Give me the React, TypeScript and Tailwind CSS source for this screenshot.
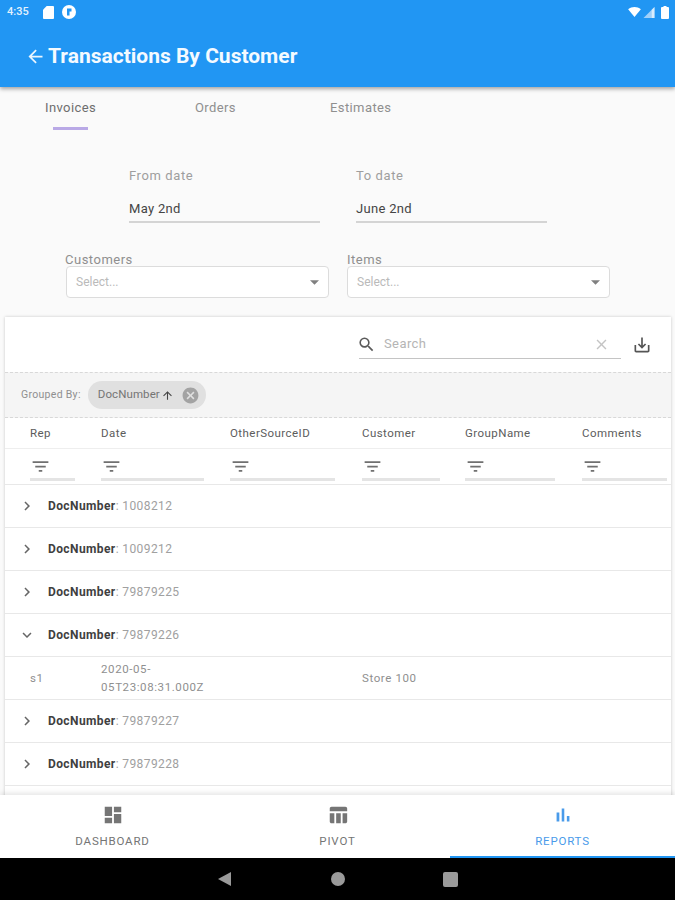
const font = { fontFamily: 'Roboto, "Noto Sans", sans-serif' }

function Icon({ d, className }: { d: string; className?: string }) {
  return (
    <svg viewBox="0 0 24 24" fill="currentColor" className={className}>
      <path d={d} />
    </svg>
  )
}

const FILTER = 'M10 18h4v-2h-4v2zM3 6v2h18V6H3zm3 7h12v-2H6v2z'
const CHEVRON_RIGHT = 'M8.59 16.59 13.17 12 8.59 7.41 10 6l6 6-6 6z'
const CHEVRON_DOWN = 'M7.41 8.59 12 13.17l4.59-4.58L18 10l-6 6-6-6z'

const columns = [
  { name: 'Rep', line: 'w-[45px]' },
  { name: 'Date', line: 'w-[103px]' },
  { name: 'OtherSourceID', line: 'w-[105px]' },
  { name: 'Customer', line: 'w-[78px]' },
  { name: 'GroupName', line: 'w-[90px]' },
  { name: 'Comments', line: 'w-[85px]' },
]

const gridCols = 'grid grid-cols-[71px_129px_132px_103px_117px_89px] pl-[25px]'

function GroupRow({ doc, open }: { doc: string; open?: boolean }) {
  return (
    <div className="flex h-[43px] items-center border-b border-[#e8e8e8] pl-[13px]">
      <Icon d={open ? CHEVRON_DOWN : CHEVRON_RIGHT} className="h-[18px] w-[18px] text-[#666]" />
      <span className="ml-[12px] pb-[1px] text-[12px] tracking-[0.4px] text-[#a0a0a0]">
        <b className="font-bold text-[#3f3f3f]">DocNumber</b>: {doc}
      </span>
    </div>
  )
}

function SelectBox({ label, width, labelClass }: { label: string; width: string; labelClass?: string }) {
  return (
    <div className={width}>
      <div className={'h-[13px] text-[13px] leading-[14px] tracking-[0.5px] text-[#8f8f8f] ' + (labelClass ?? '')}>{label}</div>
      <div className="flex h-[32px] items-center justify-between rounded border border-[#dcdcdc] bg-white pl-[9px] pr-[9px]">
        <span className="text-[12px] text-[#bababa]">Select...</span>
        <svg viewBox="0 0 10 5" className="h-[5px] w-[9px] text-[#808080]" fill="currentColor">
          <path d="M0 0h10L5 5z" />
        </svg>
      </div>
    </div>
  )
}

function DateField({ label, value }: { label: string; value: string }) {
  return (
    <div className="w-[191px]">
      <div className="text-[13px] leading-[16px] tracking-[0.6px] text-[#9e9e9e]">{label}</div>
      <div className="mt-[16px] border-b-2 border-[#d4d4d4] pb-[4px] text-[13px] leading-[17px] tracking-[0.3px] text-[#454545]">{value}</div>
    </div>
  )
}

function NavItem({ label, d, active }: { label: string; d: string; active?: boolean }) {
  return (
    <div
      className={
        active
          ? 'flex flex-1 flex-col items-center border-b-2 border-[#2196f3] text-[#4a9bea]'
          : 'flex flex-1 flex-col items-center border-b-2 border-transparent text-[#757575]'
      }
    >
      <Icon d={d} className="mt-[9px] h-[22px] w-[22px]" />
      <span className="mt-[8px] text-[11.5px] leading-[14px] tracking-[0.8px]">{label}</span>
    </div>
  )
}

export default function App() {
  return (
    <div style={font} className="flex h-[900px] w-[675px] flex-col overflow-hidden bg-[#fafafa]">
      {/* app bar */}
      <div className="relative z-10 h-[87px] shrink-0 bg-[#2196f3] text-white shadow-[0_2px_4px_rgba(0,0,0,0.35)]">
        <div className="flex h-[24px] items-center pl-[7px] pr-[6px]">
          <span className="text-[11px] font-medium text-[#e3f1fd]">4:35</span>
          <svg viewBox="0 0 12 14" className="ml-[14px] h-[13px] w-[11px]" fill="currentColor">
            <path d="M4 0h7a1 1 0 0 1 1 1v12a1 1 0 0 1-1 1H1a1 1 0 0 1-1-1V4z" />
          </svg>
          <svg viewBox="0 0 14 14" className="ml-[8px] h-[14px] w-[14px]">
            <circle cx="7" cy="7" r="7" fill="#fff" />
            <path d="M5 3.5h4.5v3H7.5V10.5H5z" fill="#2196f3" />
          </svg>
          <div className="ml-auto flex items-center gap-[2px]">
            <svg viewBox="0 0 14 11" className="h-[10px] w-[13px]" fill="currentColor">
              <path d="M0 2.5C4-.8 10-.8 14 2.5L7 11z" />
            </svg>
            <svg viewBox="0 0 12 12" className="h-[11px] w-[12px]">
              <path d="M12 0v12H0z" fill="#9fd0fa" />
              <path d="M12 0v12H9V3z" fill="#fff" opacity="0.6" />
            </svg>
            <svg viewBox="0 0 8 13" className="ml-[4px] h-[13px] w-[8px]" fill="currentColor">
              <path d="M2.5 0h3v1H7a1 1 0 0 1 1 1v10a1 1 0 0 1-1 1H1a1 1 0 0 1-1-1V2a1 1 0 0 1 1-1h1.5z" />
            </svg>
          </div>
        </div>
        <div className="mt-[19px] flex items-center pl-[25px]">
          <Icon d="M20 11H7.83l5.59-5.59L12 4l-8 8 8 8 1.41-1.41L7.83 13H20v-2z" className="h-[21px] w-[21px] text-[#eaf5fe]" />
          <span className="ml-[2px] text-[21px] font-bold leading-[26px] text-[#f4faff]">Transactions By Customer</span>
        </div>
      </div>

      {/* content, cut off by the bottom nav */}
      <div className="min-h-0 flex-1 overflow-hidden">
        <div className="flex h-[44px] pl-[45px] text-[13px] tracking-[0.4px] text-[#8f8f8f]">
          <div className="relative w-[150px] pt-[11px] text-[#6e6e6e]">
            Invoices
            <div className="absolute left-[8px] top-[40px] h-[3px] w-[35px] bg-[#b9a9e6]" />
          </div>
          <div className="w-[135px] pt-[11px]">Orders</div>
          <div className="pt-[11px]">Estimates</div>
        </div>

        <div className="mt-[37px] flex gap-[36px] pl-[129px]">
          <DateField label="From date" value="May 2nd" />
          <DateField label="To date" value="June 2nd" />
        </div>

        <div className="mt-[30px] flex gap-[18px] pl-[66px]">
          <SelectBox label="Customers" width="w-[263px]" labelClass="-ml-[1px]" />
          <SelectBox label="Items" width="w-[263px]" />
        </div>

        {/* table card */}
        <div className="ml-[5px] mt-[19px] w-[666px] bg-white shadow-[0_0_3px_rgba(0,0,0,0.2)]">
          <div className="flex h-[55px] items-center justify-end pr-[19px]">
            <div className="flex h-[28px] w-[262px] items-center border-b border-[#c4c4c4] pr-[11px]">
              <Icon
                d="M15.5 14h-.79l-.28-.27A6.47 6.47 0 0 0 16 9.5 6.5 6.5 0 1 0 9.5 16c1.61 0 3.09-.59 4.23-1.57l.27.28v.79l5 4.99L20.49 19l-4.99-5zm-6 0C7.01 14 5 11.99 5 9.5S7.01 5 9.5 5 14 7.01 14 9.5 11.99 14 9.5 14z"
                className="-ml-[2px] h-[19px] w-[19px] text-[#5a5a5a]"
              />
              <span className="ml-[8px] text-[13px] tracking-[0.4px] text-[#b5b5b5]">Search</span>
              <Icon
                d="M19 6.41 17.59 5 12 10.59 6.41 5 5 6.41 10.59 12 5 17.59 6.41 19 12 13.41 17.59 19 19 17.59 13.41 12 19 6.41z"
                className="ml-auto h-[17px] w-[17px] text-[#c4c4c4]"
              />
            </div>
            <Icon
              d="M19 12v7H5v-7H3v7c0 1.1.9 2 2 2h14c1.1 0 2-.9 2-2v-7h-2zm-6 .67 2.59-2.58L17 11.5l-5 5-5-5 1.41-1.41L11 12.67V3h2z"
              className="ml-[11px] h-[20px] w-[20px] text-[#555]"
            />
          </div>

          <div className="flex h-[46px] items-center border-y border-dashed border-[#d8d8d8] bg-[#f5f5f5] pl-[16px]">
            <span className="text-[10.5px] tracking-[0.3px] text-[#8f8f8f]">Grouped By:</span>
            <div className="ml-[7px] flex h-[28px] items-center rounded-full bg-[#e0e0e0] pl-[10px] pr-[6px]">
              <span className="text-[11.5px] tracking-[0.1px] text-[#757575]">DocNumber</span>
              <Icon d="M4 12l1.41 1.41L11 7.83V20h2V7.83l5.58 5.59L20 12l-8-8-8 8z" className="ml-[1px] h-[13px] w-[13px] text-[#444]" />
              <Icon
                d="M12 2C6.47 2 2 6.47 2 12s4.47 10 10 10 10-4.47 10-10S17.53 2 12 2zm5 13.59L15.59 17 12 13.41 8.41 17 7 15.59 10.59 12 7 8.41 8.41 7 12 10.59 15.59 7 17 8.41 13.41 12 17 15.59z"
                className="ml-[7px] h-[19px] w-[19px] text-[#a3a3a3]"
              />
            </div>
          </div>

          <div className={gridCols + ' h-[31px] items-center border-b border-[#eeeeee] pt-[2px] text-[11.5px] tracking-[0.45px] text-[#5c5c5c]'}>
            {columns.map(c => (
              <div key={c.name}>{c.name}</div>
            ))}
          </div>

          <div className={gridCols + ' h-[36px] border-b border-[#e8e8e8] pb-[3px]'}>
            {columns.map(c => (
              <div key={c.name} className="flex flex-col justify-end">
                <Icon d={FILTER} className="mb-[1px] h-[21px] w-[21px] text-[#707070]" />
                <div className={c.line + ' h-[3px] bg-[#e4e4e4]'} />
              </div>
            ))}
          </div>

          <GroupRow doc="1008212" />
          <GroupRow doc="1009212" />
          <GroupRow doc="79879225" />
          <GroupRow doc="79879226" open />
          <div className={gridCols + ' h-[43px] items-center border-b border-[#e8e8e8] text-[11.5px] leading-[18px] tracking-[0.6px] text-[#8f8f8f]'}>
            <div>s1</div>
            <div>
              2020-05-
              <br />
              05T23:08:31.000Z
            </div>
            <div />
            <div>Store 100</div>
          </div>
          <GroupRow doc="79879227" />
          <GroupRow doc="79879228" />
          <div className="h-[30px]" />
        </div>
      </div>

      {/* bottom nav */}
      <div className="relative z-10 flex h-[63px] shrink-0 bg-white shadow-[0_-2px_5px_rgba(0,0,0,0.1)]">
        <NavItem label="DASHBOARD" d="M3 13h8V3H3v10zm0 8h8v-6H3v6zm10 0h8V11h-8v10zm0-18v6h8V3h-8z" />
        <NavItem label="PIVOT" d="M10 10.02h5V21h-5zM17 21h3c1.1 0 2-.9 2-2v-9h-5v11zm3-18H5c-1.1 0-2 .9-2 2v3h19V5c0-1.1-.9-2-2-2zM3 19c0 1.1.9 2 2 2h3V10H3v9z" />
        <NavItem label="REPORTS" d="M5 9.2h3V19H5zM10.6 5h2.8v14h-2.8zm5.6 8H19v6h-2.8z" active />
      </div>

      {/* android nav */}
      <div className="flex h-[42px] shrink-0 items-center bg-black pl-[218px]">
        <svg viewBox="0 0 13 14" className="h-[14px] w-[13px]" fill="#9a9a9a">
          <path d="M13 0v14L0 7z" />
        </svg>
        <div className="ml-[100px] h-[14px] w-[14px] rounded-full bg-[#9a9a9a]" />
        <div className="ml-[98px] h-[15px] w-[15px] rounded-[2px] bg-[#9a9a9a]" />
      </div>
    </div>
  )
}
